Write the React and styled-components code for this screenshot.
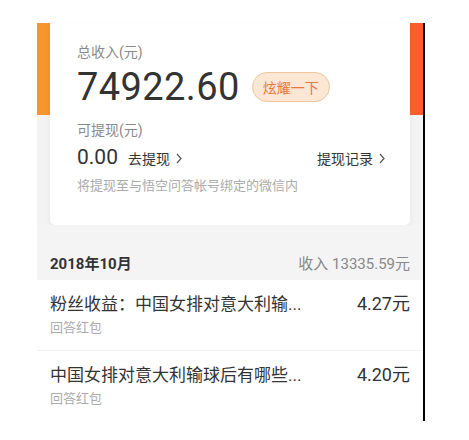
import styled, { createGlobalStyle } from "styled-components";

const Global = createGlobalStyle`
  body {
    margin: 0;
    background: #fff;
    font-family: Roboto, "Noto Sans CJK SC", sans-serif;
  }
`;

const Screen = styled.div`
  margin: 23px 0 0 37px;
  width: 386px;
  border-right: 2px solid #000;
`;

const Top = styled.div`
  padding: 0 13px;
  background: linear-gradient(90deg, #f7962f, #fb5d2a) no-repeat top / 100% 92px,
    #f3f3f3;
`;

const Card = styled.div`
  background: #fff;
  border-radius: 0 0 5px 5px;
  box-shadow: 0 2px 5px rgba(0, 0, 0, 0.06);
  padding: 19px 25px 30px 27px;
`;

const Label = styled.div`
  font-size: 14px;
  line-height: 20px;
  color: #8a8a8a;
`;

const AmountRow = styled.div`
  display: flex;
  align-items: center;
  height: 44px;
  margin: 3px 0 11px;
`;

const Amount = styled.span`
  font-size: 38px;
  color: #333;
  letter-spacing: 0.4px;
`;

const Badge = styled.span`
  margin-left: 12px;
  height: 28px;
  padding: 0 10px;
  display: inline-flex;
  align-items: center;
  border-radius: 15px;
  background: #fce7d4;
  border: 1px solid #f0c5a0;
  color: #e4783f;
  font-size: 14px;
`;

const WithdrawRow = styled.div`
  display: flex;
  align-items: center;
  height: 28px;
  margin-top: 3px;
`;

const Small = styled.span`
  font-size: 21px;
  color: #333;
`;

const Link = styled.span`
  display: inline-flex;
  align-items: center;
  gap: 6px;
  font-size: 14px;
  color: #333;
  margin-left: ${(p) => (p.$push ? "auto" : "10px")};
  margin-top: 2px;
`;

const Note = styled.div`
  font-size: 13px;
  line-height: 18px;
  color: #ababab;
  margin-top: 6px;
`;

const Header = styled.div`
  display: flex;
  justify-content: space-between;
  align-items: center;
  background: #f4f4f4;
  padding: 29px 13px 6px;
  line-height: 20px;
`;

const Month = styled.span`
  font-size: 15px;
  font-weight: bold;
  color: #333;
`;

const Total = styled.span`
  font-size: 15px;
  color: #888;
`;

const Row = styled.div`
  display: flex;
  justify-content: space-between;
  padding: 12px 13px 13px;
  border-bottom: 1px solid #f2f2f2;
  &:last-child {
    border-bottom: none;
  }
`;

const Title = styled.div`
  font-size: 17px;
  line-height: 24px;
  color: #333;
`;

const Sub = styled.div`
  font-size: 13px;
  line-height: 18px;
  color: #ababab;
  margin-top: 3px;
`;

const Money = styled.div`
  font-size: 18px;
  line-height: 24px;
  color: #333;
`;

const Chevron = () => (
  <svg width="6" height="11" viewBox="0 0 6 11">
    <path d="M1 1l4 4.5L1 10" fill="none" stroke="#555" strokeWidth="1.2" />
  </svg>
);

const rows = [
  { title: "粉丝收益：中国女排对意大利输...", money: "4.27元" },
  { title: "中国女排对意大利输球后有哪些...", money: "4.20元" },
];

export default function App() {
  return (
    <>
      <Global />
      <Screen>
        <Top>
          <Card>
            <Label>总收入(元)</Label>
            <AmountRow>
              <Amount>74922.60</Amount>
              <Badge>炫耀一下</Badge>
            </AmountRow>
            <Label>可提现(元)</Label>
            <WithdrawRow>
              <Small>0.00</Small>
              <Link>
                去提现 <Chevron />
              </Link>
              <Link $push>
                提现记录 <Chevron />
              </Link>
            </WithdrawRow>
            <Note>将提现至与悟空问答帐号绑定的微信内</Note>
          </Card>
        </Top>
        <Header>
          <Month>2018年10月</Month>
          <Total>收入 13335.59元</Total>
        </Header>
        {rows.map((r) => (
          <Row key={r.title}>
            <div>
              <Title>{r.title}</Title>
              <Sub>回答红包</Sub>
            </div>
            <Money>{r.money}</Money>
          </Row>
        ))}
      </Screen>
    </>
  );
}
